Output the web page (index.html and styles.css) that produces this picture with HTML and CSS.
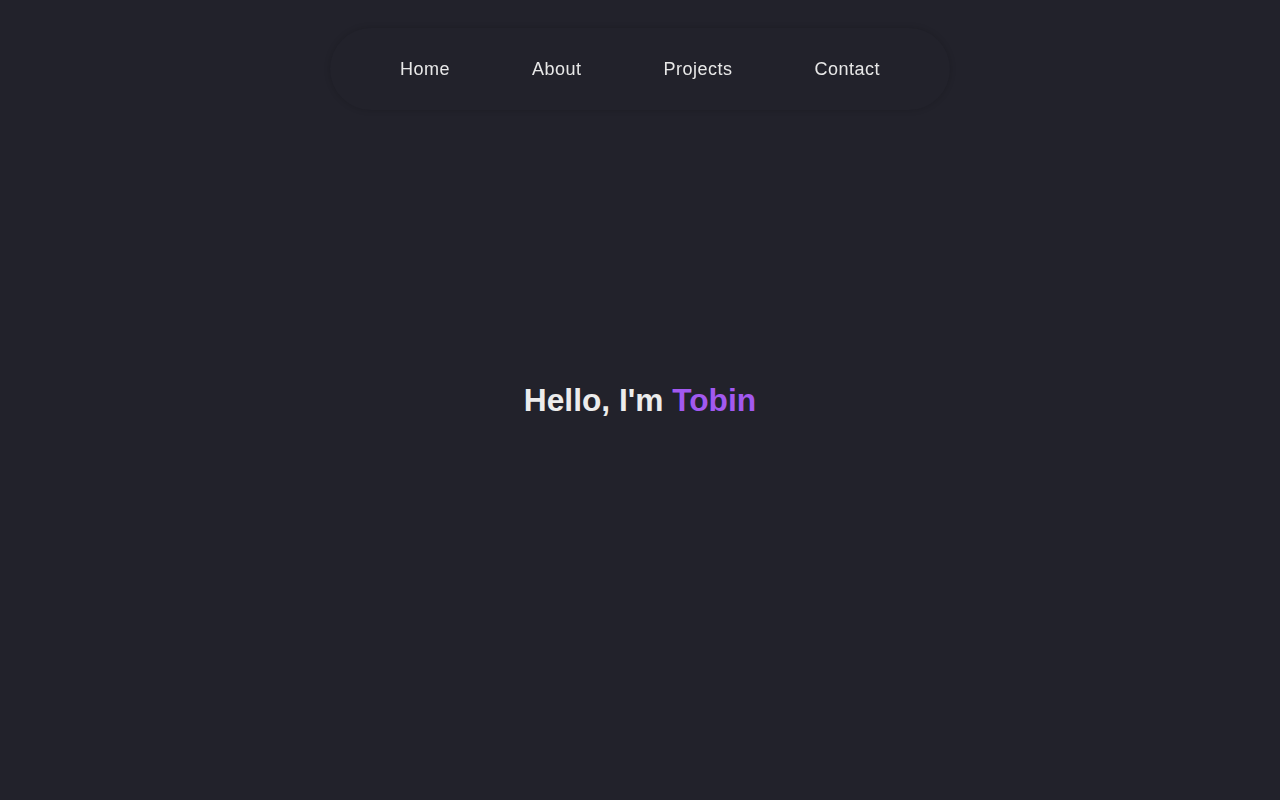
FILE: index.html
```html
<!DOCTYPE html>
<html lang="en">
  <head>
    <meta charset="UTF-8" />
    <meta name="viewport" content="width=device-width, initial-scale=1.0" />
    <title>Tobin</title>
    <link rel="stylesheet" href="styles.css">
  </head>
  <body>
    <header class="nav-bar">
      <nav class="nav-pill">
        <a href="#home">Home</a>
        <a href="#about">About</a>
        <a href="#projects">Projects</a>
        <a href="#contact">Contact</a>
      </nav>
    </header>

    <main class="hero" id="home">
      <h1>Hello, I'm <span class="name">Tobin</span></h1>
    </main>
  </body>
</html>
```

FILE: styles.css
```css
body {
  font-family: "Liberation Sans", Arial, sans-serif;
  margin: 0;
  padding: 0;
  background-color: #22222b;
  color: #e8e8e8;
}

/* Floating nav */
.nav-bar {
  position: fixed;
  top: 28px;
  left: 0;
  right: 0;
  display: flex;
  justify-content: center;
}
.nav-pill {
  display: flex;
  align-items: center;
  height: 82px;
  padding: 0 29px;
  border-radius: 41px;
  background-color: #22222b;
  box-shadow: 0 0 6px rgba(0, 0, 0, 0.16);
}
.nav-pill a {
  padding: 0 41px;
  color: #e8e8e8;
  text-decoration: none;
  font-size: 18px;
  letter-spacing: 0.5px;
}

/* Hero */
.hero {
  height: 100vh;
  display: flex;
  justify-content: center;
  align-items: center;
}
h1 {
  margin: 0;
  font-size: 31.7px;
  font-weight: bold;
  color: #ececec;
}
.name {
  color: #a259f0;
}
```
